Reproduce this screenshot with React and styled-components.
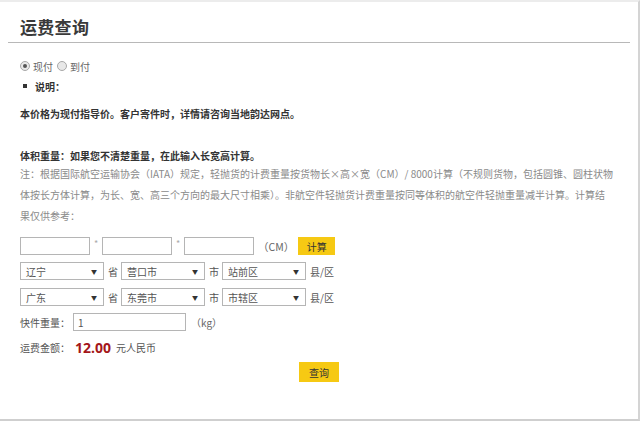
import React from "react";
import styled, { createGlobalStyle } from "styled-components";

const GlobalStyle = createGlobalStyle`
  body {
    margin: 0;
    background: #ffffff;
    font-family: "Noto Sans CJK SC", "Noto Sans", sans-serif;
  }
  * {
    box-sizing: border-box;
  }
`;

const Page = styled.div`
  width: 640px;
  height: 421px;
  border-top: 2px solid #ececec;
  border-right: 2px solid #d4d4d4;
  border-bottom: 2px solid #cfcfcf;
  display: flex;
  flex-direction: column;
  overflow: hidden;
`;

const Header = styled.div`
  margin: 0 8px;
  padding: 14px 0 4px 12px;
  border-bottom: 1px solid #b8b8b8;
`;

const Title = styled.h1`
  margin: 0;
  height: 22px;
  line-height: 22px;
  font-size: 17px;
  font-weight: 700;
  color: #3a3a3a;
  letter-spacing: 0.3px;
`;

const Content = styled.div`
  padding: 0 20px;
  display: flex;
  flex-direction: column;
  font-size: 10px;
  color: #555;
`;

const Row = styled.div`
  display: flex;
  align-items: center;
  height: ${(p) => p.$h || 16}px;
  margin-top: ${(p) => p.$mt || 0}px;
`;

const Radio = styled.span`
  width: 10px;
  height: 10px;
  border-radius: 50%;
  border: 1px solid #a8a8a8;
  background: #e8e8e8;
  display: inline-flex;
  align-items: center;
  justify-content: center;
  margin-right: 3px;
  &::after {
    content: "";
    width: 4px;
    height: 4px;
    border-radius: 50%;
    background: ${(p) => (p.$checked ? "#555" : "transparent")};
  }
`;

const RadioLabel = styled.span`
  color: #666;
  margin-right: 4px;
`;

const Bullet = styled.span`
  width: 4px;
  height: 4px;
  background: #333;
  margin: 0 8px 0 3px;
`;

const Strong = styled.span`
  font-weight: 700;
  color: #333;
`;

const Note = styled.p`
  margin: 0;
  width: 598px;
  line-height: 21px;
  color: #8a8a8a;
  font-size: 10px;
`;

const TextInput = styled.div`
  width: ${(p) => p.$w}px;
  height: 18px;
  border: 1px solid #b5b5b5;
  background: #fff;
  padding-left: 4px;
  display: flex;
  align-items: center;
  color: #555;
`;

const Star = styled.span`
  align-self: flex-start;
  color: #aaa;
  width: 12px;
  text-align: center;
  font-size: 9px;
  line-height: 12px;
  padding-top: 1px;
`;

const Unit = styled.span`
  color: #666;
  margin: 0 ${(p) => p.$mr || 8}px 0 ${(p) => p.$ml || 8}px;
  font-size: ${(p) => p.$size || 10}px;
`;

const YellowButton = styled.button`
  border: none;
  background: #f6c913;
  color: #333;
  font-family: inherit;
  font-size: 10px;
  height: ${(p) => p.$h}px;
  width: ${(p) => p.$w}px;
  padding: 0;
  cursor: pointer;
`;

const Select = styled.div`
  width: 84px;
  height: 18px;
  border: 1px solid #b5b5b5;
  padding: 0 6px 0 5px;
  display: flex;
  align-items: center;
  justify-content: space-between;
  color: #555;
`;

const Arrow = styled.span`
  font-size: 6px;
  color: #333;
`;

const SelectSuffix = styled.span`
  color: #555;
  margin: 0 3px 0 4px;
`;

const Label = styled.span`
  color: #555;
  width: 53px;
`;

const Amount = styled.span`
  color: #a4161a;
  font-size: 14px;
  font-weight: 700;
  font-family: "Open Sans", "Noto Sans", sans-serif;
  margin: 0 5px 0 2px;
`;

const Centered = styled.div`
  display: flex;
  justify-content: center;
  margin-top: 6px;
`;

function AreaSelect({ value }) {
  return (
    <Select>
      <span>{value}</span>
      <Arrow>▼</Arrow>
    </Select>
  );
}

const regions = [
  ["辽宁", "营口市", "站前区"],
  ["广东", "东莞市", "市辖区"],
];

export default function App() {
  return (
    <>
      <GlobalStyle />
      <Page>
        <Header>
          <Title>运费查询</Title>
        </Header>
        <Content>
          <Row $mt={15}>
            <Radio $checked />
            <RadioLabel>现付</RadioLabel>
            <Radio />
            <RadioLabel>到付</RadioLabel>
          </Row>
          <Row $mt={4}>
            <Bullet />
            <Strong>说明：</Strong>
          </Row>
          <Row $mt={11}>
            <Strong>本价格为现付指导价。客户寄件时，详情请咨询当地韵达网点。</Strong>
          </Row>
          <Row $mt={26}>
            <Strong>体积重量：如果您不清楚重量，在此输入长宽高计算。</Strong>
          </Row>
          <Note>
            注：根据国际航空运输协会（IATA）规定，轻抛货的计费重量按货物长×高×宽（CM）/ 8000计算（不规则货物，包括圆锥、圆柱状物体按长方体计算，为长、宽、高三个方向的最大尺寸相乘）。非航空件轻抛货计费重量按同等体积的航空件轻抛重量减半计算。计算结
            <br />
            果仅供参考：
          </Note>
          <Row $h={18} $mt={11}>
            <TextInput $w={70} />
            <Star>*</Star>
            <TextInput $w={70} />
            <Star>*</Star>
            <TextInput $w={70} />
            <Unit $size={10.5} $ml={4} $mr={4}>（CM）</Unit>
            <YellowButton $w={37} $h={18}>计算</YellowButton>
          </Row>
          {regions.map((r, i) => (
            <Row key={r[0]} $h={18} $mt={i === 0 ? 7 : 8}>
              <AreaSelect value={r[0]} />
              <SelectSuffix>省</SelectSuffix>
              <AreaSelect value={r[1]} />
              <SelectSuffix>市</SelectSuffix>
              <AreaSelect value={r[2]} />
              <SelectSuffix>县/区</SelectSuffix>
            </Row>
          ))}
          <Row $h={18} $mt={7}>
            <Label>快件重量：</Label>
            <TextInput $w={113}>1</TextInput>
            <Unit $ml={5}>（kg）</Unit>
          </Row>
          <Row $h={18} $mt={7}>
            <Label>运费金额：</Label>
            <Amount>12.00</Amount>
            <span>元人民币</span>
          </Row>
          <Centered>
            <YellowButton $w={40} $h={20}>查询</YellowButton>
          </Centered>
        </Content>
      </Page>
    </>
  );
}
